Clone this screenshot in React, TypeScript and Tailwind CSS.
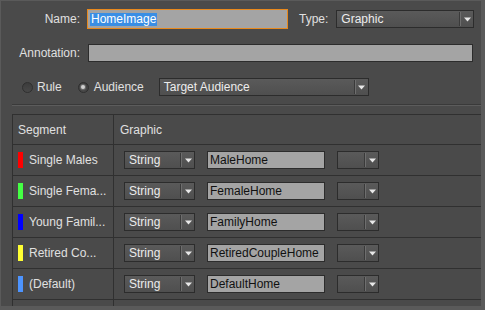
import React from "react";

const FONT = { fontFamily: '"Liberation Sans", Arial, sans-serif' };

function Arrow() {
  return (
    <svg width="7" height="5" viewBox="0 0 7 5" className="block">
      <polygon points="0,0.5 7,0.5 3.5,4.5" fill="#e8e8e8" />
    </svg>
  );
}

function Select({ w, label, arrowW = 12 }: { w: string; label?: string; arrowW?: number }) {
  return (
    <div
      className={`${w} h-[18px] flex items-stretch border border-[#2c2c2c] bg-gradient-to-b from-[#5a5a5a] to-[#4f4f4f] shrink-0`}
    >
      <div className="flex-1 flex items-center pl-[4px] text-[12px] text-[#ececec] leading-none overflow-hidden whitespace-nowrap">
        {label}
      </div>
      <div className="flex items-stretch py-[1px]">
        <div className="w-[1px] bg-[#3a3a3a]" />
        <div className="w-[1px] bg-[#6e6e6e]" />
      </div>
      <div className={`flex items-center justify-center ${arrowW === 12 ? "w-[12px]" : "w-[13px]"}`}>
        <Arrow />
      </div>
    </div>
  );
}

function Radio({ checked }: { checked?: boolean }) {
  return (
    <div className="w-[11px] h-[11px] rounded-full border border-[#2f2f2f] bg-gradient-to-b from-[#3c3c3c] to-[#484848] flex items-center justify-center shrink-0">
      {checked && <div className="w-[4px] h-[4px] rounded-full bg-[#d0d0d0] shadow-[0_0_1px_1px_rgba(200,200,200,0.35)]" />}
    </div>
  );
}

const rows = [
  { color: "bg-[#ff0000]", name: "Single Males", value: "MaleHome" },
  { color: "bg-[#44ff44]", name: "Single Fema...", value: "FemaleHome" },
  { color: "bg-[#0000ff]", name: "Young Famil...", value: "FamilyHome" },
  { color: "bg-[#ffff33]", name: "Retired Co...", value: "RetiredCoupleHome" },
  { color: "bg-[#4d94ff]", name: "(Default)", value: "DefaultHome" },
];

export default function App() {
  return (
    <div
      style={FONT}
      className="w-[485px] h-[310px] overflow-hidden bg-[#4a4a4a] border-t border-l border-r-[4px] border-b-[4px] border-[#5a5a5a] text-[12px] text-[#e0e0e0]"
    >
      {/* Row 1 */}
      <div className="flex items-center h-[20px] mt-[8px]">
        <div className="w-[79px] text-right leading-none">Name:</div>
        <div className="ml-[7px] w-[201px] h-[20px] border border-[#e8891d] bg-[#a4a4a4] flex items-center pl-[2px] shrink-0">
          <span className="bg-[#3a8ee4] text-white leading-[13px] h-[13px] px-[1px]">HomeImage</span>
        </div>
        <div className="ml-[11px] leading-none">Type:</div>
        <div className="ml-[8px]">
          <Select w="w-[138px]" label="Graphic" />
        </div>
      </div>

      {/* Row 2 */}
      <div className="flex items-center h-[18px] mt-[15px]">
        <div className="w-[79px] text-right leading-none">Annotation:</div>
        <div className="ml-[8px] w-[385px] h-[18px] border border-[#2c2c2c] bg-[#a4a4a4] shrink-0" />
      </div>

      {/* Row 3 */}
      <div className="flex items-center h-[18px] mt-[16px] pl-[21px]">
        <Radio />
        <div className="ml-[4px] leading-none">Rule</div>
        <div className="ml-[16px]">
          <Radio checked />
        </div>
        <div className="ml-[5px] leading-none">Audience</div>
        <div className="ml-[15px]">
          <Select w="w-[210px]" label="Target Audience" />
        </div>
      </div>

      {/* Separator */}
      <div className="ml-[11px] mt-[8px] h-[2px] border-t border-[#3a3a3a] bg-[#5c5c5c]" />

      {/* Table */}
      <div className="ml-[11px] mt-[8px] border-t border-l border-[#303030]">
        <div className="flex h-[30px] border-b border-[#303030]">
          <div className="w-[101px] border-r border-[#303030] flex items-center pl-[5px] shrink-0">Segment</div>
          <div className="flex-1 flex items-center pl-[6px]">Graphic</div>
        </div>
        {rows.map((r) => (
          <div key={r.name} className="flex h-[31px] border-b border-[#303030]">
            <div className="w-[101px] border-r border-[#303030] flex items-center pl-[5px] shrink-0">
              <div className={`w-[5px] h-[16px] ${r.color} shrink-0`} />
              <div className="ml-[6px] whitespace-nowrap leading-none">{r.name}</div>
            </div>
            <div className="flex-1 flex items-center pl-[10px]">
              <Select w="w-[71px]" label="String" />
              <div className="ml-[12px] w-[118px] h-[18px] border border-[#2c2c2c] bg-[#a4a4a4] flex items-center pl-[2px] text-[#111] leading-none whitespace-nowrap overflow-hidden shrink-0">
                {r.value}
              </div>
              <div className="ml-[12px]">
                <Select w="w-[42px]" />
              </div>
            </div>
          </div>
        ))}
        <div className="flex h-[31px]">
          <div className="w-[101px] border-r border-[#303030] shrink-0" />
          <div className="flex-1" />
        </div>
      </div>
    </div>
  );
}
